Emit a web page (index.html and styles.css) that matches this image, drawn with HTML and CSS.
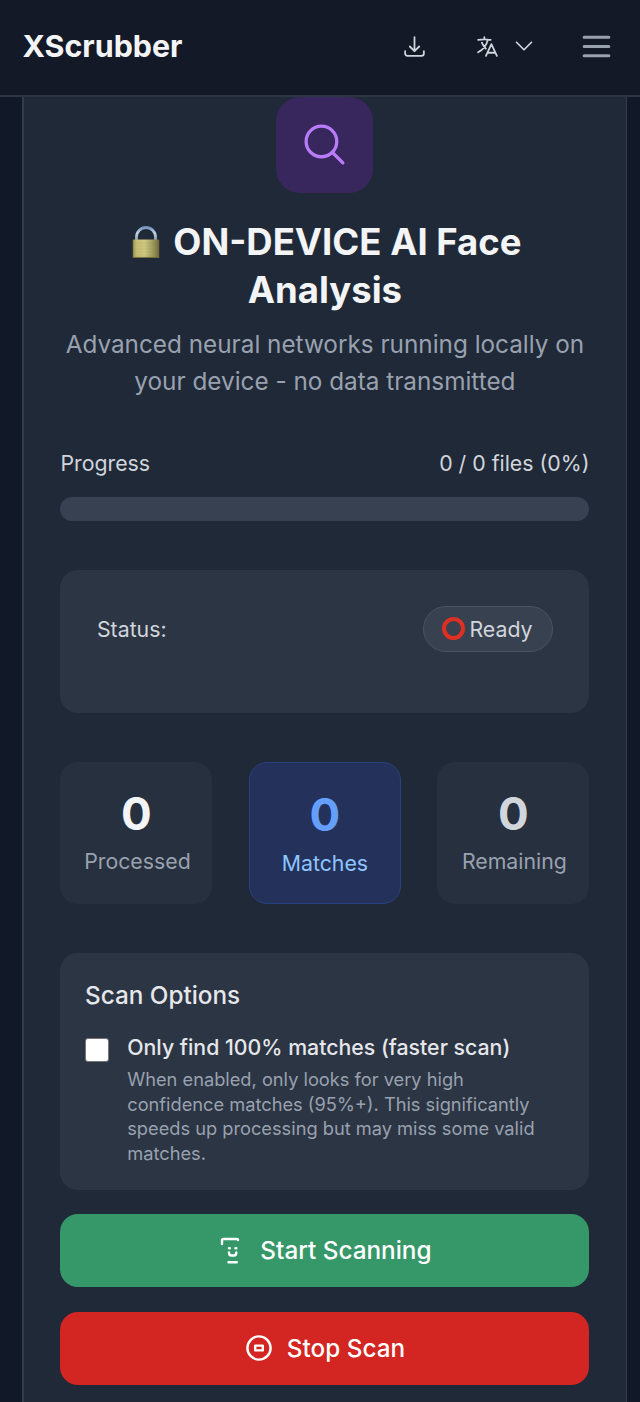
FILE: index.html
```html
<!DOCTYPE html>
<html lang="en">
<head>
<meta charset="utf-8">
<title>XScrubber</title>
<link rel="stylesheet" href="styles.css">
</head>
<body>
<header class="topbar">
  <div class="brand">XScrubber</div>
  <nav class="actions">
    <svg class="icon-download" viewBox="0 0 24 24"><path d="M3 16.5v2.25A2.25 2.25 0 0 0 5.25 21h13.500A2.250 2.250 0 0 0 21 18.750V16.500M16.500 12 12 16.500m0 0L7.500 12m4.500 4.500V3"/></svg>
    <svg class="icon-language" viewBox="0 0 24 24"><path d="m10.500 21 5.250-11.250L21 21m-9-3h7.500M3 5.621a48.474 48.474 0 0 1 6-.371m0 0c1.120 0 2.233.038 3.334.114M9 5.250V3m3.334 2.364C11.176 10.658 7.690 15.080 3 17.502m9.334-12.138c.896.061 1.785.147 2.666.257m-4.589 8.495a18.023 18.023 0 0 1-3.827-5.802"/></svg>
    <svg class="icon-chevron" viewBox="0 0 24 24"><path d="m19.500 8.250-7.500 7.500-7.500-7.500"/></svg>
    <svg class="icon-menu" viewBox="0 0 24 24"><path d="M4 6h16M4 12h16M4 18h16"/></svg>
  </nav>
</header>
<main class="card">
  <div class="hero-icon"><svg viewBox="0 0 24 24"><path d="m21 21-5.197-5.197m0 0A7.500 7.500 0 1 0 5.196 5.196a7.500 7.500 0 0 0 10.607 10.607Z"/></svg></div>
  <h1 class="title"><svg class="lock" viewBox="0 0 28 34">
    <defs>
      <linearGradient id="brass"><stop offset="0" stop-color="#8f8646"/><stop offset=".12" stop-color="#c5bd72"/><stop offset=".45" stop-color="#d0c981"/><stop offset=".8" stop-color="#99935a"/><stop offset="1" stop-color="#6e6738"/></linearGradient>
      <linearGradient id="steel" x2="0" y2="1"><stop offset="0" stop-color="#7895bf"/><stop offset=".4" stop-color="#c2d2e5"/><stop offset="1" stop-color="#8798ac"/></linearGradient>
    </defs>
    <path d="M4.500 16V12a9.500 9.500 0 0 1 19 0v4" fill="none" stroke="url(#steel)" stroke-width="2.800"/>
    <rect x=".8" y="14.500" width="26.400" height="18.500" rx="1" fill="url(#brass)"/>
    <path d="M1 18h26M1 21h26M1 24h26M1 27h26M1 30h26" stroke="#827b42" stroke-width=".5" opacity=".3"/>
    <path d="M1 32.400h26" stroke="#6f6737"/>
  </svg>ON-DEVICE AI Face<br>Analysis</h1>
  <p class="subtitle">Advanced neural networks running locally on<br>your device - no data transmitted</p>

  <div class="progress-head"><span>Progress</span><span>0 / 0 files (0%)</span></div>
  <div class="progress-track"></div>

  <section class="status">
    <span>Status:</span>
    <span class="pill"><i class="ring"></i>Ready</span>
  </section>

  <section class="stats">
    <div class="stat"><b>0</b><span>Processed</span></div>
    <div class="stat matches"><b>0</b><span>Matches</span></div>
    <div class="stat remaining"><b>0</b><span>Remaining</span></div>
  </section>

  <section class="options">
    <h2>Scan Options</h2>
    <label class="option">
      <input type="checkbox" class="check">
      <span class="option-text">
        <span class="option-name">Only find 100% matches (faster scan)</span>
        <span class="option-help">When enabled, only looks for very high<br>confidence matches (95%+). This significantly<br>speeds up processing but may miss some valid<br>matches.</span>
      </span>
    </label>
  </section>

  <button class="btn start"><svg class="icon-scan" viewBox="0 0 28 30"><path d="M4 9V5.500Q4 4 5.500 4H18.500Q20 4 20 5"/><path d="M11 13.300h.8M17.500 13.300h.8M11 17.500q0 3 2.300 3h2.700q2.300 0 2.300-3M10.500 27.200h8.300"/></svg>Start Scanning</button>
  <button class="btn stop"><svg class="icon-stop" viewBox="0 0 28 28"><circle cx="14" cy="14" r="11.600"/><rect x="10.200" y="11.600" width="7.600" height="4.800"/></svg>Stop Scan</button>
</main>
</body>
</html>
```
FILE: styles.css
```css
* { box-sizing: border-box; }
body {
  margin: 0;
  height: 1402px;
  overflow: hidden;
  background: #111827;
  color: #d1d5dc;
  font-family: Inter, "Liberation Sans", sans-serif;
}
svg { display: block; fill: none; stroke: currentColor; stroke-linecap: round; stroke-linejoin: round; }
.topbar {
  height: 97px;
  padding: 0 28px 3px 22.500px;
  border-bottom: 2px solid #2d3544;
  background: #131927;
  display: flex;
  align-items: center;
  justify-content: space-between;
}
.brand { font-size: 30.400px; font-weight: 700; color: #f3f4f6; }
.actions { display: flex; align-items: center; }
.actions svg { stroke-width: 1.700; }
.icon-download { width: 25px; height: 25px; margin-right: 48px; }
.icon-language { width: 25px; height: 25px; margin-right: 12px; }
.icon-chevron { width: 24px; height: 24px; margin-right: 42px; }
.actions .icon-menu { width: 37px; height: 37px; margin-right: -3px; color: #99a1af; stroke-width: 2; }
.card {
  margin: 0 13px 0 22px;
  height: 1305px;
  padding: 0 36.600px 0 36.450px;
  border: solid #323b4a;
  border-width: 0 1px 0 2px;
  background: #202938;
  text-align: center;
}
.hero-icon {
  width: 97px;
  height: 96px;
  margin: 0 auto;
  border-radius: 24px;
  background: #38275c;
  color: #b87cfa;
  display: grid;
  place-items: center;
}
.hero-icon svg { width: 49px; height: 49px; margin-top: -2px; stroke-width: 1.600; }
.title { margin: 25px 0 0; font-size: 36.500px; line-height: 48px; font-weight: 700; color: #f3f4f6; white-space: nowrap; }
.lock { display: inline-block; width: 28px; height: 34px; margin: 0 13.500px 0 3.500px; vertical-align: -4px; stroke: none; }
.subtitle { margin: 12px 0 0; font-size: 24.300px; line-height: 37px; color: #99a1af; white-space: nowrap; }
.progress-head { margin-top: 47px; height: 32px; display: flex; justify-content: space-between; align-items: center; font-size: 21.300px; }
.progress-track { margin-top: 18px; height: 24px; border-radius: 12px; background: #374151; }
.status {
  margin-top: 49px;
  height: 143px;
  padding: 36px 36.500px 0;
  border-radius: 18px;
  background: #2c3543;
  display: flex;
  justify-content: space-between;
  align-items: flex-start;
  font-size: 21.300px;
  line-height: 46px;
}
.pill { display: flex; align-items: center; width: 130px; height: 46px; padding-left: 18px; border: 1px solid #4a5362; border-radius: 23px; background: #38414f; }
.ring { width: 23px; height: 23px; margin: -1px 4.500px 0 0; border: 4px solid #dd3023; border-radius: 50%; }
.stats { margin-top: 48.500px; display: grid; grid-template-columns: repeat(3, 1fr); gap: 36.500px; }
.stat { height: 142.500px; padding-top: 24px; border-radius: 18px; background: #27303e; color: #99a1af; display: flex; flex-direction: column; align-items: center; font-size: 21.300px; }
.stat b { font-size: 45.600px; line-height: 56px; color: #f3f4f6; }
.stat span { line-height: 32px; margin-top: 3px; padding-left: 2px; }
.stat.matches { border: 1px solid #29427e; background: #24325b; color: #8ec5ff; }
.stat.matches span { margin-top: 4px; padding-left: 0; }
.stat.matches b { color: #649ffb; }
.stat.remaining b { color: #d1d5dc; }
.options { margin-top: 48.500px; height: 237px; padding: 24px 24.500px; border-radius: 18px; background: #2c3543; text-align: left; }
.options h2 { margin: 0; font-size: 24.300px; line-height: 37px; font-weight: 500; color: #e5e7eb; }
.option { display: flex; margin-top: 16.200px; }
.check { appearance: none; flex: none; width: 24px; height: 24px; margin: 8px 18.300px 0 0; border: 1px solid #767676; border-radius: 3px; background: #fff; }
.option-text { display: flex; flex-direction: column; white-space: nowrap; }
.option-name { font-size: 21.300px; line-height: 34px; font-weight: 500; color: #e5e7eb; }
.option-help { margin-top: 3.800px; font-size: 18.240px; line-height: 24.400px; color: #99a1af; }
.btn {
  width: 100%;
  height: 73px;
  margin: 24.700px 0 0;
  padding: 0 0 1px;
  border: 0;
  border-radius: 18px;
  color: #fff;
  font: 500 24.300px Inter, "Liberation Sans", sans-serif;
  display: flex;
  align-items: center;
  justify-content: center;
}
.start { background: #369769; }
.stop { background: #d32522; }
.icon-scan { width: 28px; height: 30px; margin-right: 14px; stroke-width: 2.400; }
.icon-stop { width: 28px; height: 28px; margin-right: 14px; stroke-width: 2.400; }
```
